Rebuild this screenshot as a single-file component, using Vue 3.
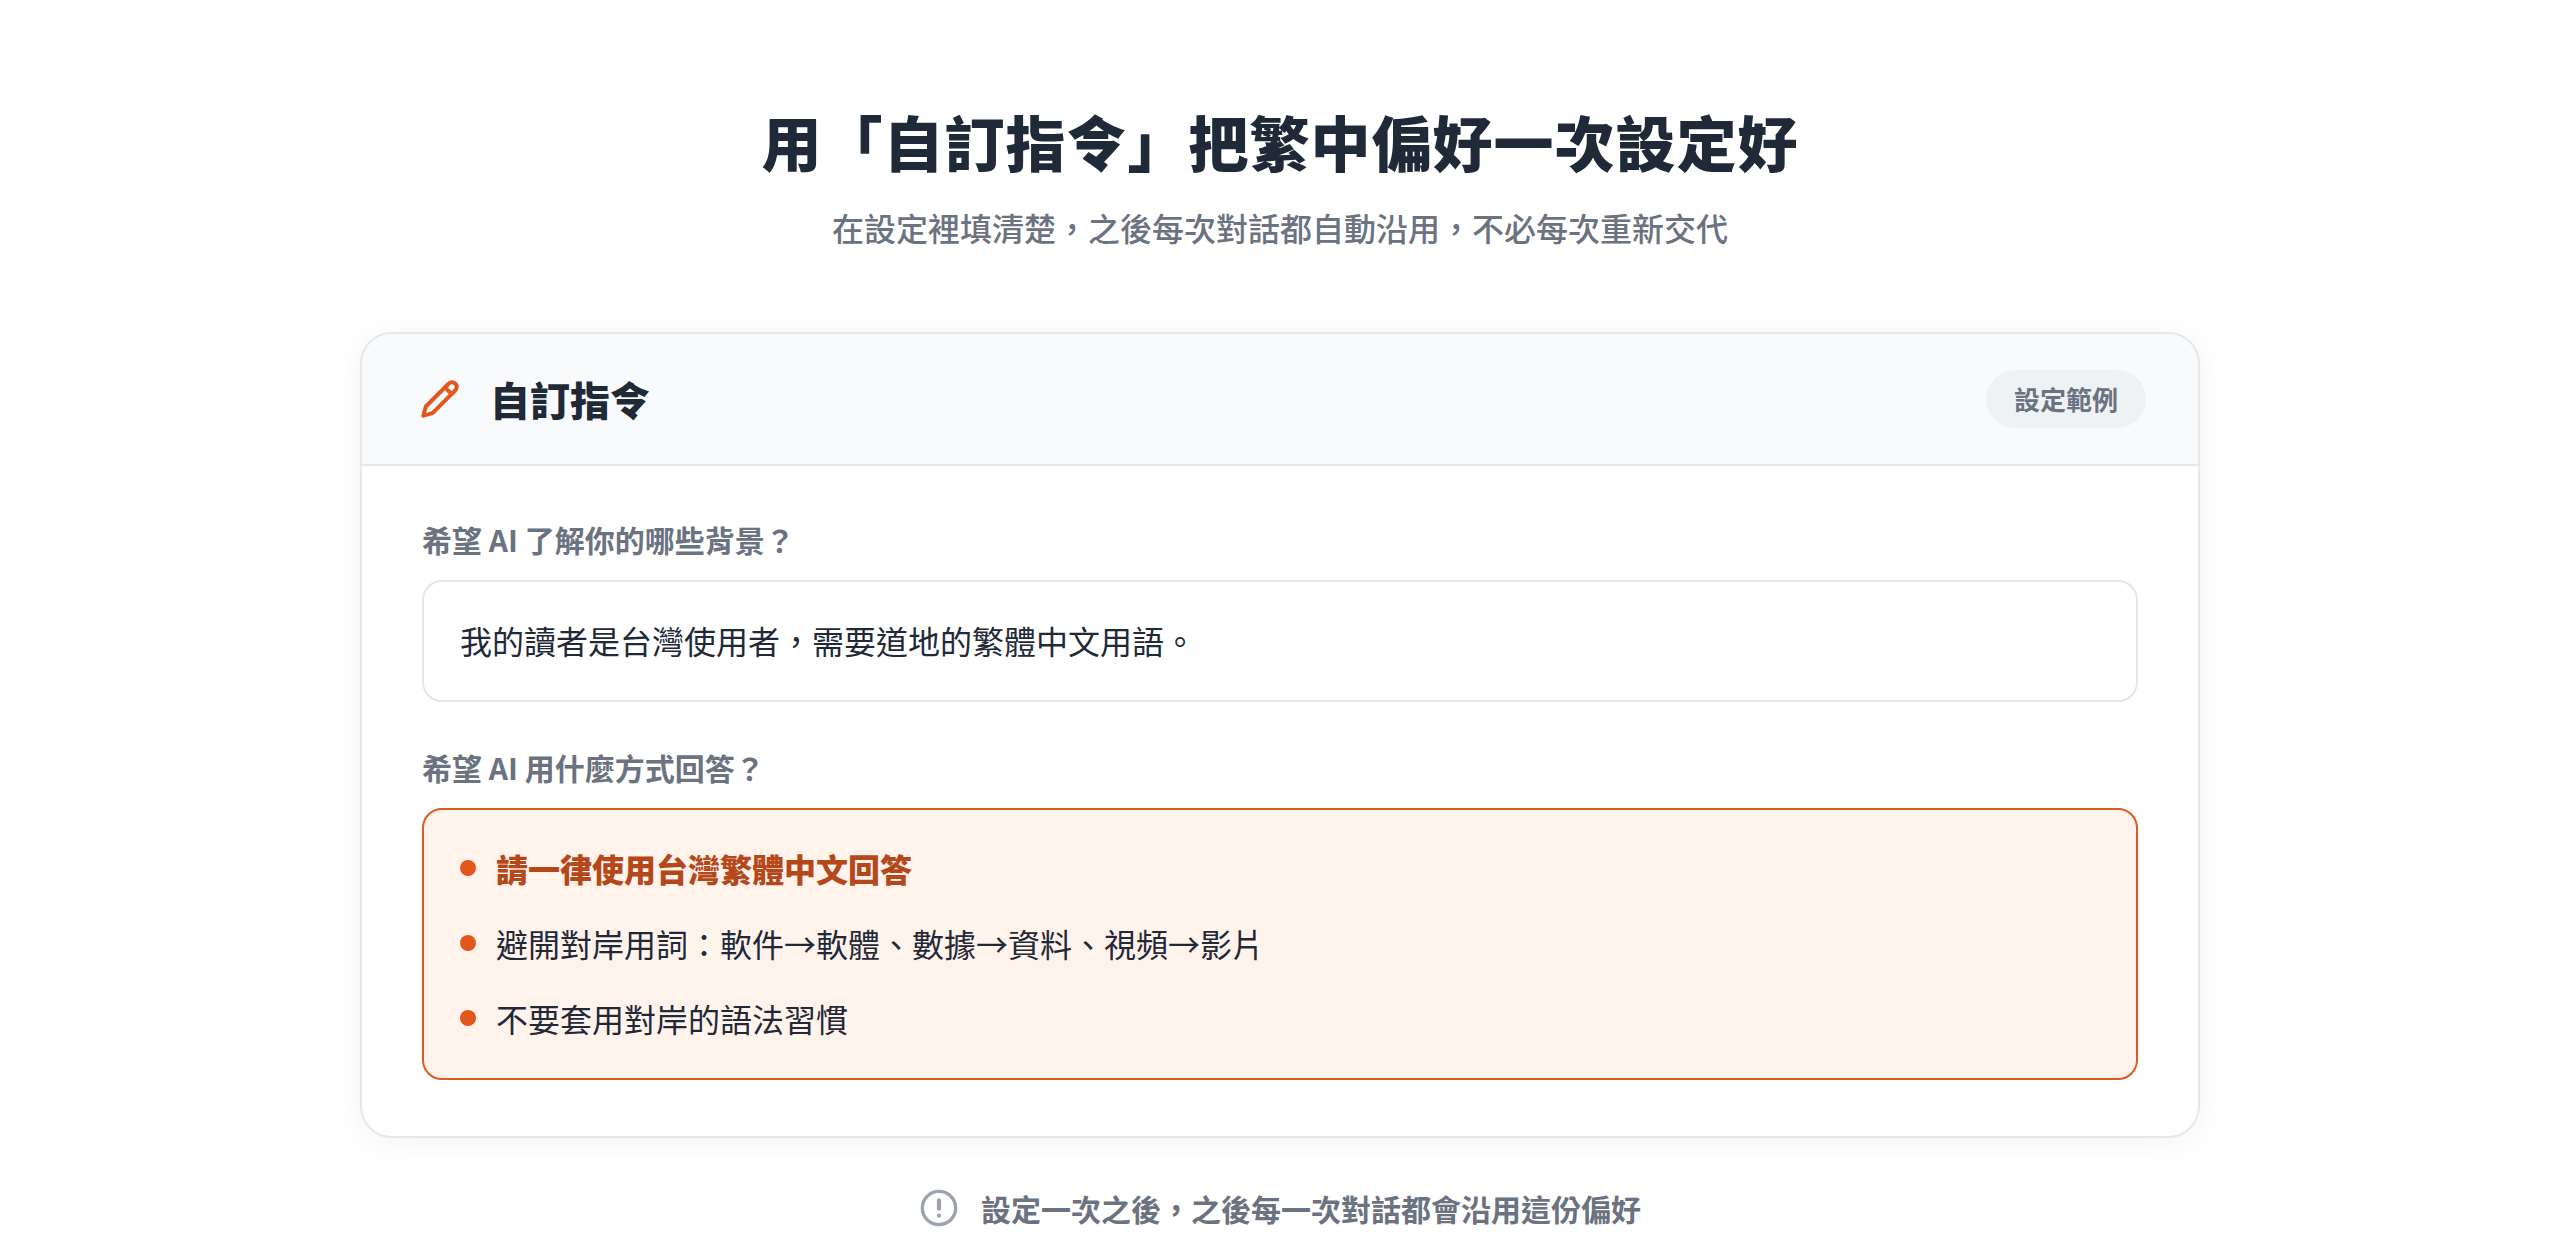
<script setup>
import { ref } from 'vue'

const background = ref('我的讀者是台灣使用者，需要道地的繁體中文用語。')

const rules = [
  { text: '請一律使用台灣繁體中文回答', strong: true },
  { text: '避開對岸用詞：軟件→軟體、數據→資料、視頻→影片', strong: false },
  { text: '不要套用對岸的語法習慣', strong: false },
]
</script>

<template>
  <main class="page">
    <header class="intro">
      <h1>用「自訂指令」把繁中偏好一次設定好</h1>
      <p>在設定裡填清楚，之後每次對話都自動沿用，不必每次重新交代</p>
    </header>

    <section class="card" aria-labelledby="card-title">
      <div class="card-head">
        <svg class="pencil" viewBox="0 0 24 24" aria-hidden="true">
          <path d="M17 3a2.85 2.83 0 1 1 4 4L7.5 20.5 2 22l1.5-5.5Z" />
          <path d="m15 5 4 4" />
        </svg>
        <h2 id="card-title">自訂指令</h2>
        <span class="pill">設定範例</span>
      </div>

      <div class="card-body">
        <div class="field">
          <label class="field-label" for="background">希望 AI 了解你的哪些背景？</label>
          <input id="background" v-model="background" class="box" type="text" />
        </div>
        <div class="field">
          <h3 id="style-label" class="field-label">希望 AI 用什麼方式回答？</h3>
          <ul class="box rules" aria-labelledby="style-label">
            <li v-for="rule in rules" :key="rule.text" :class="{ strong: rule.strong }">{{ rule.text }}</li>
          </ul>
        </div>
      </div>
    </section>

    <footer class="note">
      <svg viewBox="0 0 24 24" aria-hidden="true">
        <circle cx="12" cy="12" r="10" />
        <path class="mark" d="M12 7.4v5M12 16.6h.01" />
      </svg>
      <p>設定一次之後，之後每一次對話都會沿用這份偏好</p>
    </footer>
  </main>
</template>

<style>
body {
  background: #fff;
}
</style>

<style scoped>
.page {
  box-sizing: border-box;
  max-width: 1920px;
  margin: 0 auto;
  padding: 96px 40px 16px;
  color: #1f2937;
  font-family: "Noto Sans CJK TC", sans-serif;
  font-size: 32px;
  line-height: 54px;
}

h1,
h2,
h3,
p,
ul {
  margin: 0;
}

.intro {
  text-align: center;
}

h1 {
  font-size: 60px;
  line-height: 90px;
  font-weight: 900;
  letter-spacing: 1px;
}

.intro p {
  margin-top: 14px;
  color: #6b7280;
  font-weight: 500;
}

.card {
  margin-top: 78px;
  border: 2px solid #e5e7eb;
  border-radius: 32px;
  background: #fff;
  box-shadow: 0 4px 32px rgba(0, 0, 0, 0.05);
  overflow: hidden;
}

.card-head {
  display: flex;
  align-items: center;
  padding: 36px 52px 36px 58px;
  border-bottom: 2px solid #e5e7eb;
  background: #f9fafc;
}

svg {
  flex: none;
  width: 40px;
  height: 40px;
  fill: none;
  stroke-width: 2;
  stroke-linecap: round;
  stroke-linejoin: round;
}

.pencil {
  margin-right: 30px;
  stroke: #e2571c;
  stroke-width: 2.4;
}

h2 {
  font-size: 40px;
  line-height: 58px;
  font-weight: 900;
}

.pill {
  margin-left: auto;
  padding: 8px 28px;
  border-radius: 32px;
  background: #eef2f5;
  color: #6b7280;
  font-size: 26px;
  line-height: 42px;
  font-weight: 700;
}

.card-body {
  display: flex;
  flex-direction: column;
  gap: 42px;
  padding: 50px 60px 56px;
}

.field-label {
  display: block;
  margin-bottom: 18px;
  color: #6b7280;
  font-size: 30px;
  line-height: 46px;
  font-weight: 700;
}

.box {
  display: block;
  box-sizing: border-box;
  width: 100%;
  padding: 31px 36px 33px;
  border: 2px solid #e5e7eb;
  border-radius: 20px;
  background: #fff;
  color: inherit;
  font: inherit;
}

input.box {
  height: 122px;
}

.rules {
  display: flex;
  flex-direction: column;
  gap: 21px;
  border-color: #dc5a25;
  background: #fff3ec;
  list-style: none;
}

.rules li {
  display: flex;
  align-items: center;
  gap: 20px;
}

.rules li::before {
  content: "";
  flex: none;
  width: 16px;
  height: 16px;
  border-radius: 50%;
  background: #e2571c;
}

.rules .strong {
  color: #b5481a;
  font-weight: 900;
}

.note {
  display: flex;
  align-items: center;
  justify-content: center;
  gap: 22px;
  margin-top: 43px;
  color: #6b7280;
  font-size: 30px;
  font-weight: 700;
}

.note svg {
  stroke: #9ca3af;
}

.note .mark {
  stroke-width: 2.5;
}
</style>
